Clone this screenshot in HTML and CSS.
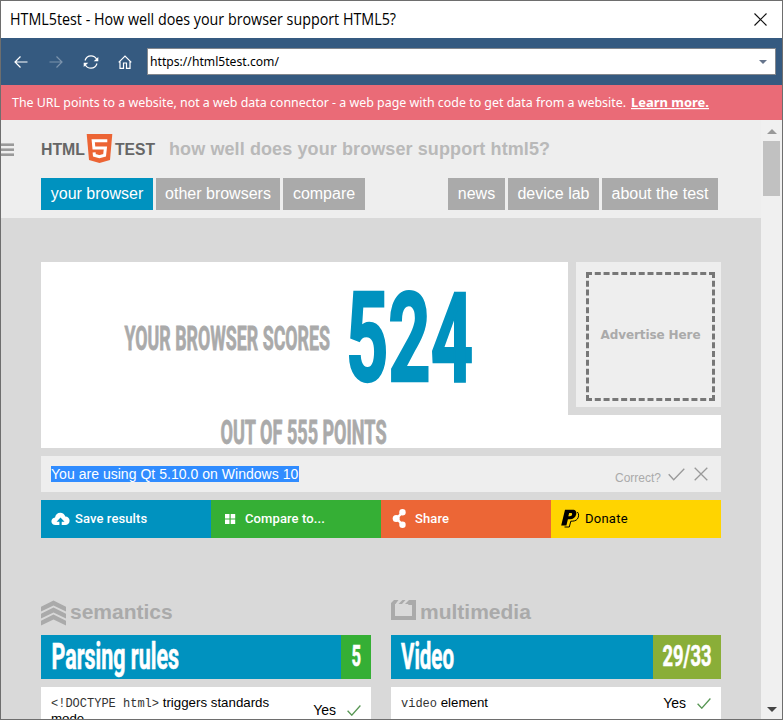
FILE: index.html
```html
<!DOCTYPE html>
<html lang="en">
<head>
<meta charset="utf-8">
<title>HTML5test - How well does your browser support HTML5?</title>
<link rel="stylesheet" href="styles.css">
</head>
<body>
<div class="window">
  <div class="titlebar">
    <svg class="caption" width="400" height="36"><text x="9" y="24" textLength="386" lengthAdjust="spacingAndGlyphs">HTML5test - How well does your browser support HTML5?</text></svg>
    <svg class="close" width="13" height="13" viewBox="0 0 13 13"><path d="M.5.5l12 12M12.5.5l-12 12" fill="none" stroke="#111" stroke-width="1.15"/></svg>
  </div>
  <div class="toolbar">
    <svg width="14" height="14" viewBox="0 0 14 14"><path d="M13.5 7H1M6.5 1.5L1 7l5.500 5.500"/></svg>
    <svg class="disabled" width="14" height="14" viewBox="0 0 14 14"><path d="M.5 7H13M7.500 1.500L13 7l-5.500 5.500"/></svg>
    <svg width="16" height="14" viewBox="0 0 16 14"><path d="M2 5.500C3 2.500 5.500.8 8 .8c2.600 0 4.600 1.300 5.700 3.500M14 8.500c-1 3-3.500 4.700-6 4.700-2.600 0-4.600-1.300-5.700-3.500"/><path class="solid" d="M15.300 2v4.300h-4.600zM.7 12V7.700h4.600z"/></svg>
    <svg width="14" height="14" viewBox="0 0 14 14"><path d="M.7 7.300L7 1l6.300 6.300M2 6.300v7h3.500V8h3v5.300H12v-7"/></svg>
    <div class="address">
      <svg width="140" height="25"><text x="2" y="17" textLength="129" lengthAdjust="spacingAndGlyphs">https://html5test.com/</text></svg>
      <span class="dropdown"></span>
    </div>
  </div>
  <div class="notice">
    <svg width="715" height="35"><text x="11" y="22" textLength="614" lengthAdjust="spacingAndGlyphs">The URL points to a website, not a web data connector - a web page with code to get data from a website.</text><text class="learn" x="630" y="22" textLength="78" lengthAdjust="spacingAndGlyphs">Learn more.</text></svg>
  </div>
  <div class="viewport">
    <main class="page">
      <header class="header">
        <div class="menu"><i></i><i></i><i></i></div>
        <div class="brand">
          <svg class="logo" width="116" height="33" viewBox="0 0 116 33">
            <text x="0" y="24" textLength="44" lengthAdjust="spacingAndGlyphs">HTML</text>
            <path fill="#ec6434" d="M45.700 3h25.600L69 29l-10.500 3L48 29z"/>
            <path fill="none" stroke="#fff" stroke-width="3" d="M66.300 9.800H52.200l.7 7.200h11.500l-.8 7.300-5.200 1.500-5-1.500-.3-3"/>
            <text x="74" y="24" textLength="40" lengthAdjust="spacingAndGlyphs">TEST</text>
          </svg>
          <span class="tagline">how well does your browser support html5?</span>
        </div>
        <nav class="nav">
          <a class="tab current w112">your browser</a><a class="tab w124">other browsers</a><a class="tab w82">compare</a>
          <a class="tab w57 push">news</a><a class="tab w91">device lab</a><a class="tab w116">about the test</a>
        </nav>
      </header>
      <section class="content">
        <div class="score">
          <div class="score-top">
            <div class="score-main">
              <svg width="527" height="153"><g class="gothic">
                <text class="grey" x="83.500" y="88" font-size="33.400" textLength="205.500" lengthAdjust="spacingAndGlyphs">YOUR BROWSER SCORES</text>
                <text class="points" x="305" y="118.500" font-size="125" textLength="127" lengthAdjust="spacingAndGlyphs">524</text></g></svg>
            </div>
            <aside class="ad"><div>Advertise Here</div></aside>
          </div>
          <div class="score-bottom">
            <svg width="680" height="33"><g class="gothic"><text class="grey" x="179.500" y="29" font-size="33.400" textLength="166" lengthAdjust="spacingAndGlyphs">OUT OF 555 POINTS</text></g></svg>
          </div>
        </div>
        <div class="agent">
          <span class="selected">You are using Qt 5.10.0 on Windows 10</span>
          <span class="correct">Correct?</span>
          <svg width="17" height="13" viewBox="0 0 17 13"><path d="M.7 6.300l5 5.500L16.300.8"/></svg>
          <svg class="wrong" width="14" height="14" viewBox="0 0 14 14"><path d="M.7.7l12.600 12.600M13.300.7L.7 13.300"/></svg>
        </div>
        <div class="actions">
          <a class="action save"><svg width="19" height="14" viewBox="0 0 19 14"><path fill="#fff" d="M4.500 13C2 13 .4 11.400.4 9.200c0-2 1.500-3.600 3.600-3.800C4.500 2.700 6.700.8 9.300.8c2.400 0 4.300 1.400 5 3.700 2.500.1 4.300 1.900 4.300 4.200 0 2.500-1.800 4.300-4.400 4.300z"/><path fill="#0092bf" d="M9.500 5.500l4 4.300h-2.800V13H8.400V9.800H5.600z"/></svg><span>Save results</span></a>
          <a class="action compare"><svg width="19" height="14" viewBox="0 0 19 14"><path fill="#fff" d="M4 2h4.500v4.500H4zM9.700 2h4.500v4.500H9.700zM4 7.600h4.500v4.500H4zM9.700 7.600h4.500v4.500H9.700z"/></svg><span>Compare to...</span></a>
          <a class="action share"><svg width="19" height="19" viewBox="0 0 19 19"><path d="M11.300 3.500L5.500 9.500l5.800 6" fill="none" stroke="#fff" stroke-width="2.500"/><g fill="#fff"><circle cx="11.500" cy="3.300" r="3.200"/><circle cx="5.200" cy="9.500" r="3.500"/><circle cx="11.500" cy="15.700" r="3.200"/></g></svg><span>Share</span></a>
          <a class="action donate"><svg width="19" height="19" viewBox="0 0 19 19"><path fill="#000" fill-rule="evenodd" d="M4 .8h7.500c3.200 0 4.500 2 3.600 5-.9 3-3 4.400-6 4.400H6.900l-1.500 6.200H.2zM8.200 4l-.9 3.300h1.600c1.300 0 2-.6 2.200-1.700.3-1.100-.2-1.600-1.300-1.600z"/><path fill="none" stroke="#000" d="M16.300 3c1.800 1.300 1.700 4.800.1 7-1.500 1.900-3.800 2.200-6.600 2.200L8.300 18H3.500"/></svg><span>Donate</span></a>
        </div>
        <div class="columns">
          <section>
            <h2><svg width="25" height="26" viewBox="0 0 25 26"><path fill="#aaa" d="M0 6.700L12.500.5 25 6.700v4.800L12.500 5.600 0 11.500zM0 13.700l12.500-6.200L25 13.700v4.800l-12.500-5.900L0 18.500zM0 20.700l12.500-6.200L25 20.700v4.800l-12.500-5.900L0 25.500z"/></svg><span>semantics</span></h2>
            <div class="bar"><svg width="300" height="44"><g class="gothic"><text x="10.500" y="34" font-size="36" textLength="127.500" lengthAdjust="spacingAndGlyphs">Parsing rules</text></g></svg>
              <svg class="result full" width="30" height="44"><g class="gothic"><text x="10.500" y="31" font-size="29" textLength="9.500" lengthAdjust="spacingAndGlyphs">5</text></g></svg></div>
            <div class="row tall"><p><code>&lt;!DOCTYPE html&gt;</code> triggers standards mode</p><span class="yes">Yes</span><svg width="14" height="11" viewBox="0 0 14 11"><path d="M.6 5.700l4.200 4.500L13.400.5"/></svg></div>
          </section>
          <section>
            <h2><svg width="25" height="26" viewBox="0 0 25 26"><path fill="#aaa" d="M0 3L3 0h4.500L4.500 4H4v12h17V5h-4l2.500-4L21 0h4v20H0zM7.500 4l4-4h3l-3.500 4zM14 4l4-4h3l-3.500 4z"/></svg><span>multimedia</span></h2>
            <div class="bar"><svg width="262" height="44"><g class="gothic"><text x="10" y="34" font-size="36" textLength="53" lengthAdjust="spacingAndGlyphs">Video</text></g></svg>
              <svg class="result partial" width="68" height="44"><g class="gothic"><text x="9.500" y="31" font-size="29" textLength="49" lengthAdjust="spacingAndGlyphs">29/33</text></g></svg></div>
            <div class="row"><p><code>video</code> element</p><span class="yes">Yes</span><svg width="14" height="11" viewBox="0 0 14 11"><path d="M.6 5.700l4.200 4.500L13.400.5"/></svg></div>
          </section>
        </div>
      </section>
    </main>
    <div class="scrollbar"><i class="up"></i><i class="thumb"></i><i class="down"></i></div>
  </div>
</div>
</body>
</html>
```
FILE: styles.css
```css
* { box-sizing: border-box; }
body { margin: 0; font-family: "Liberation Sans", Arial, sans-serif; overflow: hidden; }
svg { display: block; flex: none; }
.window { width: 783px; height: 720px; border: 1px solid #6e6e6e; background: #fff; display: flex; flex-direction: column; overflow: hidden; }
.titlebar { height: 37px; flex: none; display: flex; justify-content: space-between; }
.caption { font: 16px "Open Sans", sans-serif; }
.close { margin: 12px 15px 0 0; }
.toolbar { height: 47px; flex: none; background: #355a80; display: flex; align-items: center; padding-left: 13px; }
.toolbar > svg { margin-right: 21px; fill: none; stroke: #fff; stroke-width: 1.2; }
.toolbar > svg:nth-of-type(2) { margin-right: 20px; }
.toolbar > svg:nth-of-type(3) { margin-right: 19px; }
.toolbar > svg:nth-of-type(4) { margin-right: 15px; }
.toolbar .disabled { opacity: .35; }
.toolbar .solid { fill: #fff; stroke: none; }
.address { width: 629px; height: 27px; background: #fff; border: 1px solid #83878d; display: flex; align-items: center; justify-content: space-between; font: 13px "Noto Sans", sans-serif; }
.dropdown { border: 4px solid transparent; border-top-color: #66758c; border-bottom: 0; margin: 0 8px 0 0; }
.notice { height: 35px; flex: none; background: #ea6b77; font: 12px "Noto Sans", sans-serif; }
.notice svg { fill: #fff; }
.learn { font-weight: 700; text-decoration: underline; }
.viewport { flex: 1; min-height: 0; display: flex; }
.page { width: 760px; background: #d9d9d9; overflow: hidden; }
.header { height: 98px; background: #eee; padding: 11px 0 0 40px; position: relative; }
.menu { position: absolute; left: 0; top: 23px; width: 13px; display: grid; gap: 2px; }
.menu i { height: 3px; background: #999; border-top: 1px solid #bbb; }
.brand { display: flex; height: 47px; align-items: flex-start; }
.logo { font: bold 16px "Liberation Sans", sans-serif; fill: #666; }
.tagline { font-size: 18px; letter-spacing: .1px; line-height: 22px; font-weight: 700; color: #b9b9b9; margin: 7px 0 0 12px; white-space: nowrap; }
.nav { width: 677px; display: flex; gap: 3px; }
.tab { height: 32px; line-height: 31px; background: #aaa; color: #fff; font-size: 16px; text-align: center; white-space: nowrap; }
.current { background: #0092bf; }
.push { margin-left: auto; }
.w112 { width: 112px; }
.w124 { width: 124px; }
.w82 { width: 82px; }
.w57 { width: 57px; }
.w91 { width: 91px; }
.w116 { width: 116px; }
.content { width: 680px; margin: 44px 0 0 40px; }
.gothic { font-family: Roboto, sans-serif; font-weight: 700; fill: #fff; stroke: #fff; stroke-width: .6px; }
.gothic .grey { fill: #aaa; stroke: #aaa; stroke-width: .8px; }
.gothic .points { fill: #0092bf; stroke: #0092bf; stroke-width: 2.6px; }
.score-top { display: flex; justify-content: space-between; }
.score-main { width: 527px; height: 153px; background: #fff; }
.ad { width: 145px; height: 145px; background: #eee; padding: 10px; }
.ad div { width: 129px; height: 129px; border: 3px dashed #777; color: #aaa; font: bold 12px/120px "DejaVu Sans", sans-serif; letter-spacing: -.1px; text-align: center; white-space: nowrap; }
.score-bottom { background: #fff; }
.agent { height: 36px; margin: 8px 0; background: #eee; display: flex; padding-left: 10px; }
.selected { background: #308cff; color: #fff; font-size: 14px; letter-spacing: .03px; line-height: 16px; height: 16px; width: 248px; margin: 10px auto 0 0; white-space: nowrap; }
.correct { font-size: 12px; color: #aaa; margin: 15px 7px 0 0; }
.agent svg { margin: 12px 10px 0 0; fill: none; stroke: #999; stroke-width: 1.3; }
.agent .wrong { margin: 11px 13px 0 -1px; }
.actions { display: grid; grid-template-columns: repeat(4, 170px); height: 38px; }
.action { display: flex; align-items: center; gap: 5px; padding: 0 0 1px 10px; color: #fff; font: 500 13px Roboto, sans-serif; }
.action span { letter-spacing: .1px; }
.save { background: #0092bf; }
.compare { background: #35af35; }
.share { background: #ec6636; }
.donate { background: #ffd400; color: #000; font-weight: 400; }
.donate span { letter-spacing: .25px; }
.columns { display: grid; grid-template-columns: 330px 330px; gap: 20px; margin-top: 62px; }
h2 { margin: 0; height: 35px; display: flex; gap: 4px; font-size: 21px; line-height: 24px; color: #aaa; }
.bar { height: 44px; display: flex; background: #0092bf; }
.full { background: #35af35; }
.partial { background: #8aae38; }
.row { margin-top: 8px; height: 60px; background: #fff; display: flex; align-items: flex-start; padding: 8px 10px; font-size: 14px; line-height: 16px; }
.row p { margin: 0 auto 0 0; width: 230px; font-size: 13.3px; }
code { font: 12px "Liberation Mono", monospace; color: #333; }
.row svg { margin: 3px 0 0 11px; fill: none; stroke: #579653; stroke-width: 1.3; }
.tall .yes { margin-top: 7px; }
.tall svg { margin-top: 10px; }
.scrollbar { width: 21px; background: #f0f0f0; display: flex; flex-direction: column; align-items: center; padding: 9px 0 7px; }
.up { border: 5px solid transparent; border-bottom-color: #999; border-top: 0; }
.thumb { width: 17px; height: 55px; margin-top: 7px; background: #c1c1c1; }
.down { margin-top: auto; border: 5px solid transparent; border-top-color: #444; border-bottom: 0; }
```
